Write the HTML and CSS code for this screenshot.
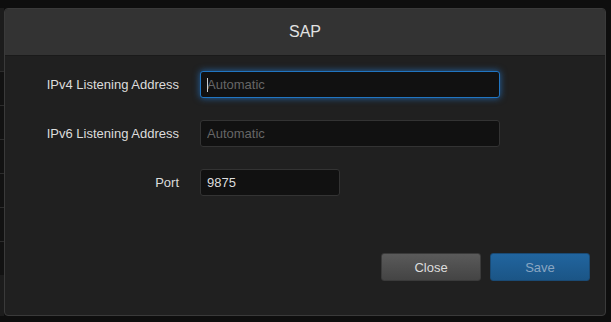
FILE: index.html
```html
<!DOCTYPE html>
<html lang="en">
<head>
    <meta charset="UTF-8">
    <meta name="viewport" content="width=device-width, initial-scale=1.0">
    <title>SAP</title>
    <link rel="stylesheet" href="styles.css">
</head>
<body>
    <div class="backdrop">
        <div class="backdrop-row"></div>
        <div class="backdrop-row"></div>
        <div class="backdrop-row"></div>
        <div class="backdrop-row"></div>
        <div class="backdrop-row"></div>
        <div class="backdrop-row"></div>
    </div>

    <div class="modal">
        <div class="modal-header">SAP</div>
        <div class="modal-body">
            <form class="form-grid">
                <label class="form-label" for="ipv4">IPv4 Listening Address</label>
                <div class="input-wrap">
                    <input class="form-input focused" id="ipv4" type="text" placeholder="Automatic">
                    <span class="caret"></span>
                </div>

                <label class="form-label" for="ipv6">IPv6 Listening Address</label>
                <input class="form-input" id="ipv6" type="text" placeholder="Automatic">

                <label class="form-label" for="port">Port</label>
                <input class="form-input port-input" id="port" type="text" value="9875">
            </form>
        </div>
        <div class="modal-footer">
            <button class="btn btn-close">Close</button>
            <button class="btn btn-save">Save</button>
        </div>
    </div>
</body>
</html>
```

FILE: styles.css
```css
html,
body {
    height: 100%;
}

body {
    margin: 0;
    padding: 8px 0 0 4px;
    box-sizing: border-box;
    background-color: #0e0e0e;
    font-family: "Liberation Sans", Arial, sans-serif;
    overflow: hidden;
}

/* page behind the overlay, only a sliver is visible on the left */
.backdrop {
    position: absolute;
    left: 0;
    top: 8px;
    width: 4px;
    height: 308px;
    background-color: #1c1c1c;
    padding-top: 63px;
    box-sizing: border-box;
}

.backdrop-row {
    height: 33px;
    border-top: 1px solid #2c2c2c;
    background-color: #121212;
}

.modal {
    position: relative;
    width: 602px;
    height: 308px;
    box-sizing: border-box;
    display: flex;
    flex-direction: column;
    background-color: #202020;
    border: 1px solid #3a3a3a;
    border-radius: 4px;
    overflow: hidden;
}

.modal-header {
    height: 46px;
    line-height: 46px;
    text-align: center;
    font-size: 16px;
    color: #e2e2e2;
    background-color: #333333;
    border-bottom: 1px solid #1a1a1a;
}

.modal-body {
    padding: 15px 0 0 0;
}

.form-grid {
    display: grid;
    grid-template-columns: 174px 300px;
    column-gap: 21px;
    row-gap: 22px;
    align-items: center;
    margin: 0;
}

.form-label {
    text-align: right;
    font-size: 13px;
    color: #dcdcdc;
}

.input-wrap {
    position: relative;
    display: flex;
}

.input-wrap .form-input {
    flex: 1;
}

.caret {
    position: absolute;
    left: 7px;
    top: 7px;
    width: 1px;
    height: 14px;
    background-color: #cccccc;
}

.form-input {
    height: 27px;
    box-sizing: border-box;
    padding: 0 6px;
    background-color: #111111;
    border: 1px solid #333333;
    border-radius: 3px;
    font-family: "Liberation Sans", Arial, sans-serif;
    font-size: 13px;
    color: #dddddd;
    outline: none;
}

.form-input::placeholder {
    color: #666666;
}

.form-input.focused {
    border-color: #2075c2;
    box-shadow: 0 0 7px rgba(35, 130, 225, 0.7);
}

.port-input {
    width: 140px;
}

.modal-footer {
    margin-top: auto;
    display: flex;
    justify-content: flex-end;
    gap: 9px;
    padding: 0 15px 34px 0;
}

.btn {
    width: 100px;
    height: 28px;
    border: 1px solid #1a1a1a;
    border-radius: 3px;
    font-family: "Liberation Sans", Arial, sans-serif;
    font-size: 13px;
    cursor: pointer;
}

.btn-close {
    background: linear-gradient(#5a5a5a, #444444);
    color: #dddddd;
    border-color: #3a3a3a;
}

.btn-save {
    background: linear-gradient(#21659f, #1b5586);
    color: #8aa6c2;
    border-color: #1a4a74;
}
```
